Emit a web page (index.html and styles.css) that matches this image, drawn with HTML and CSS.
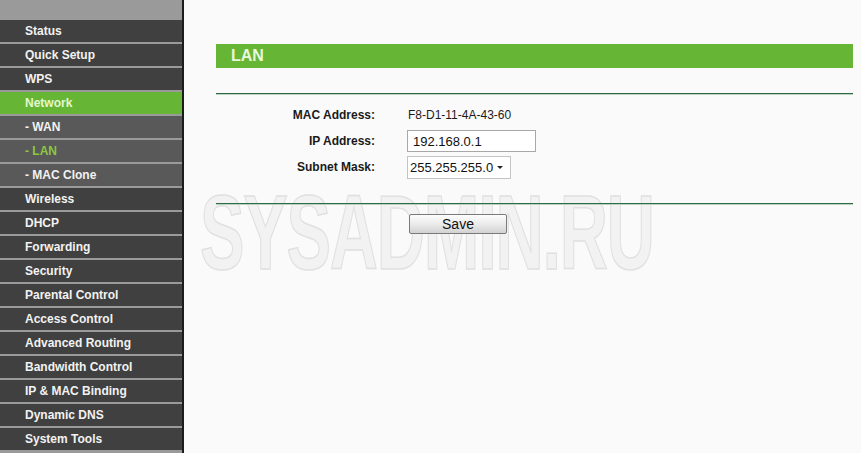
FILE: index.html
```html
<html>
  <head>
    <link rel="stylesheet" href="styles.css">
  </head>

  <body>
    <div class="page">
      <div class="menu">
        <div class="menu-item">Status</div>
        <div class="menu-item">Quick Setup</div>
        <div class="menu-item">WPS</div>
        <div class="menu-item active">Network</div>
        <div class="menu-item sub">- WAN</div>
        <div class="menu-item sub current">- LAN</div>
        <div class="menu-item sub">- MAC Clone</div>
        <div class="menu-item">Wireless</div>
        <div class="menu-item">DHCP</div>
        <div class="menu-item">Forwarding</div>
        <div class="menu-item">Security</div>
        <div class="menu-item">Parental Control</div>
        <div class="menu-item">Access Control</div>
        <div class="menu-item">Advanced Routing</div>
        <div class="menu-item">Bandwidth Control</div>
        <div class="menu-item">IP &amp; MAC Binding</div>
        <div class="menu-item">Dynamic DNS</div>
        <div class="menu-item">System Tools</div>
      </div>

      <div class="main">
        <div class="watermark">SYSADMIN.RU</div>

        <div class="panel">
          <div class="panel-title">LAN</div>
          <div class="rule"></div>

          <div class="form-grid">
            <div class="form-label">MAC Address:</div>
            <div class="form-value">F8-D1-11-4A-43-60</div>

            <div class="form-label">IP Address:</div>
            <div><input class="text-input" type="text" value="192.168.0.1"></div>

            <div class="form-label">Subnet Mask:</div>
            <div class="select-wrap">
              <select class="select-input">
                <option>255.255.255.0</option>
              </select>
              <span class="select-arrow"></span>
            </div>
          </div>

          <div class="rule bottom"></div>

          <div class="actions">
            <button class="save-button">Save</button>
          </div>
        </div>
      </div>
    </div>
  </body>
</html>
```

FILE: styles.css
```css
html, body {
  margin: 0;
  height: 100%;
  background: #fafafa;
  font-family: "Liberation Sans", Arial, sans-serif;
}

.page {
  display: flex;
  height: 100%;
  overflow: hidden;
}

/* left navigation */
.menu {
  width: 182px;
  flex-shrink: 0;
  background: #9a9a9a;
  border-right: 2px solid #1c1c1c;
  padding-top: 20px;
  display: flex;
  flex-direction: column;
  gap: 2px;
}

.menu-item {
  height: 22px;
  line-height: 22px;
  padding-left: 25px;
  background: #404040;
  color: #f2f2f2;
  font-size: 12px;
  font-weight: bold;
  white-space: nowrap;
}

.menu-item.sub {
  background: #595959;
}

.menu-item.active {
  background: #66b535;
  color: #e4f8cc;
}

.menu-item.current {
  color: #8ec641;
}

/* content */
.main {
  flex: 1;
  position: relative;
  padding: 44px 8px 0 32px;
}

.watermark {
  position: absolute;
  left: 16px;
  top: 172px;
  font-size: 106px;
  font-weight: bold;
  letter-spacing: -2px;
  color: #f2f2f2;
  -webkit-text-stroke: 1.5px #e0e0e0;
  transform: scaleX(0.63);
  transform-origin: left top;
  white-space: nowrap;
  pointer-events: none;
}

.panel {
  position: relative;
}

.panel-title {
  height: 24px;
  line-height: 23px;
  padding-left: 15px;
  background: #66b535;
  color: #eaf7dc;
  font-size: 16px;
  font-weight: bold;
}

.rule {
  margin-top: 25px;
  border-top: 1px solid #2e6a48;
  border-bottom: 1px solid #b9d2c2;
}

.rule.bottom {
  margin-top: 24px;
}

.form-grid {
  display: grid;
  grid-template-columns: 159px 1fr;
  grid-auto-rows: 24px;
  column-gap: 32px;
  row-gap: 2px;
  margin-top: 8px;
  align-items: center;
  font-size: 12px;
  color: #1a1a1a;
}

.form-label {
  text-align: right;
  font-weight: bold;
}

.form-value {
  padding-left: 1px;
}

.text-input {
  width: 129px;
  height: 22px;
  box-sizing: border-box;
  border: 1px solid #a8a8a8;
  padding: 0 5px;
  font-family: "Liberation Sans", Arial, sans-serif;
  font-size: 13px;
  color: #111;
  background: #fff;
}

.select-wrap {
  position: relative;
  width: 104px;
}

.select-input {
  appearance: none;
  -webkit-appearance: none;
  width: 104px;
  height: 23px;
  box-sizing: border-box;
  border: 1px solid #c4c4c4;
  border-radius: 0;
  padding: 0 2px;
  font-family: "Liberation Sans", Arial, sans-serif;
  font-size: 13px;
  color: #111;
  background: #fff;
}

.select-arrow {
  position: absolute;
  right: 8px;
  top: 10px;
  border-left: 3px solid transparent;
  border-right: 3px solid transparent;
  border-top: 3px solid #222;
}

.actions {
  margin-top: 9px;
  padding-left: 193px;
}

.save-button {
  width: 98px;
  height: 20px;
  padding: 0;
  border: 1px solid #7a7a7a;
  border-radius: 2px;
  background: linear-gradient(#fdfdfd, #e9e9e9 55%, #d2d2d2);
  font-family: "Liberation Sans", Arial, sans-serif;
  font-size: 14px;
  color: #111;
  line-height: 18px;
}
```
